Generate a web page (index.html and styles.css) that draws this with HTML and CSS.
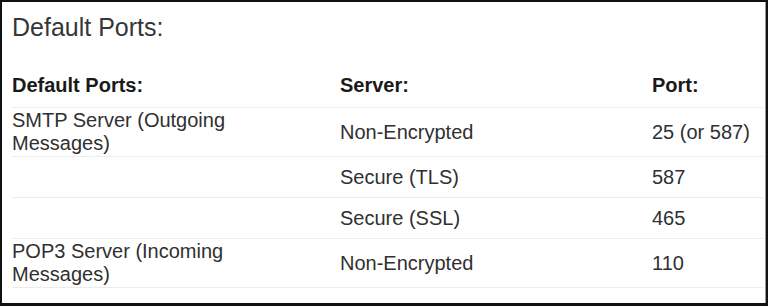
FILE: index.html
```html
<!DOCTYPE html>
<html lang="en">
<head>
<meta charset="utf-8">
<title>Default Ports</title>
<link rel="stylesheet" href="styles.css">
</head>
<body>
<div class="frame">
  <h2 class="title">Default Ports:</h2>
  <div class="ports">
    <div class="row head">
      <div class="cell">Default Ports:</div>
      <div class="cell">Server:</div>
      <div class="cell">Port:</div>
    </div>
    <div class="row">
      <div class="cell">SMTP Server (Outgoing<br>Messages)</div>
      <div class="cell">Non-Encrypted</div>
      <div class="cell">25 (or 587)</div>
    </div>
    <div class="row">
      <div class="cell"></div>
      <div class="cell">Secure (TLS)</div>
      <div class="cell">587</div>
    </div>
    <div class="row">
      <div class="cell"></div>
      <div class="cell">Secure (SSL)</div>
      <div class="cell">465</div>
    </div>
    <div class="row">
      <div class="cell">POP3 Server (Incoming<br>Messages)</div>
      <div class="cell">Non-Encrypted</div>
      <div class="cell">110</div>
    </div>
  </div>
</div>
</body>
</html>
```
FILE: styles.css
```css
html, body {
  margin: 0;
  padding: 0;
  background: #ffffff;
}

.frame {
  box-sizing: border-box;
  width: 768px;
  height: 306px;
  border-top: 2px solid #111111;
  border-left: 2px solid #111111;
  border-right: 2px solid #111111;
  border-bottom: 3px solid #111111;
  box-shadow: inset -1px 0 0 #9a9a9a;
  padding: 11px 3px 0 10px;
  font-family: "Liberation Sans", Arial, Helvetica, sans-serif;
  color: #303030;
  overflow: hidden;
}

.title {
  margin: 0;
  font-size: 25px;
  font-weight: normal;
  line-height: 28px;
  color: #363636;
}

.ports {
  margin-top: 33px;
  font-size: 20px;
  line-height: 23px;
}

.row {
  box-sizing: border-box;
  display: grid;
  grid-template-columns: 328px 312px 1fr;
  align-items: center;
  min-height: 41px;
  padding: 1px 0;
  border-bottom: 1px solid #ececec;
}

.row.head {
  min-height: 0;
  padding: 0 0 10px;
  font-weight: bold;
  color: #1a1a1a;
}
```
